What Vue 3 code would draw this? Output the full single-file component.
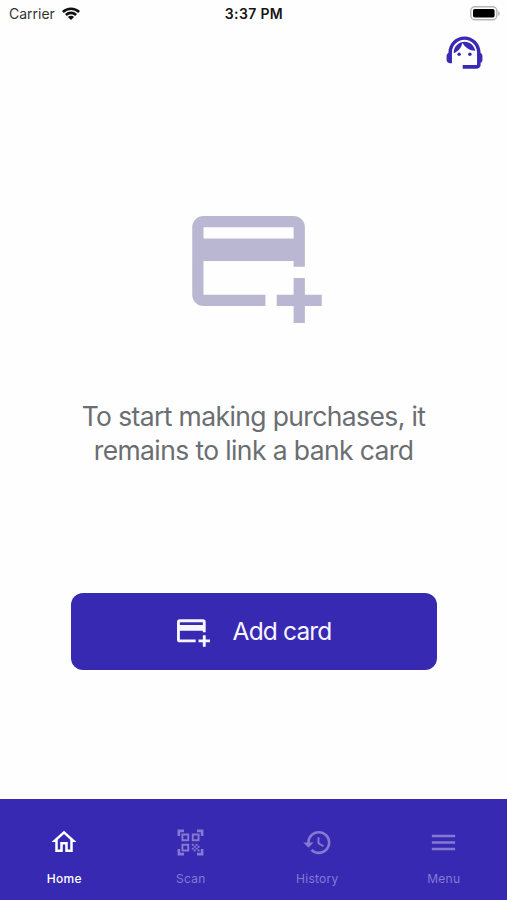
<template>
  <div class="screen">
    <header class="status-bar">
      <div class="carrier">
        <span>Carrier</span>
        <svg class="wifi" viewBox="0 0 18 13">
          <path d="M0 4.1a12.8 12.8 0 0 1 18 0l-1.8 1.9a10.2 10.2 0 0 0-14.4 0z" />
          <path d="M3 7.1a8.5 8.5 0 0 1 12 0l-1.8 1.9a6 6 0 0 0-8.4 0z" />
          <path d="M5.9 10.1a4.4 4.4 0 0 1 6.2 0L9 13z" />
        </svg>
      </div>
      <div class="time">3:37 PM</div>
      <div class="battery">
        <svg viewBox="0 0 31 15">
          <rect x="0.8" y="0.8" width="26" height="13" rx="4" class="battery-frame" />
          <rect x="3" y="3" width="21.6" height="8.6" rx="1.8" />
          <path d="M28.3 5c1.8.7 1.8 4.2 0 4.9z" class="battery-cap" />
        </svg>
      </div>
    </header>

    <div class="toolbar">
      <button class="support" aria-label="Support">
        <svg viewBox="0 0 24 24">
          <path d="M21 12.22C21 6.73 16.74 3 12 3c-4.69 0-9 3.65-9 9.28-.6.34-1 .98-1 1.72v2c0 1.1.9 2 2 2h1v-6.1c0-3.87 3.13-7 7-7s7 3.13 7 7V19h-8v2h8c1.1 0 2-.9 2-2v-1.22c.59-.31 1-.92 1-1.64v-2.3c0-.7-.41-1.31-1-1.62z" />
          <circle cx="9" cy="13" r="1" />
          <circle cx="15" cy="13" r="1" />
          <path d="M18 11.03C17.52 8.18 15.04 6 12.05 6c-3.03 0-6.29 2.51-6.03 6.45 2.47-1.01 4.33-3.21 4.86-5.89 1.31 2.63 4 4.44 7.12 4.47z" />
        </svg>
      </button>
    </div>

    <main class="content">
      <svg class="card-image" viewBox="2 4 23 19">
        <path :d="cardIcon" />
      </svg>
      <p class="message">
        <span class="line">To start making purchases, it</span>
        <span class="line">remains to link a bank card</span>
      </p>
      <button class="add-card">
        <svg viewBox="2 4 23 19">
          <path :d="cardIcon" />
        </svg>
        <span>Add card</span>
      </button>
    </main>

    <nav class="tabs">
      <button
        v-for="tab in tabs"
        :key="tab.name"
        class="tab"
        :class="[tab.name, { active: activeTab === tab.name }]"
        @click="activeTab = tab.name"
      >
        <span class="tab-icon">
          <svg viewBox="0 0 24 24"><path :d="tab.icon" /></svg>
        </span>
        <span class="tab-label">{{ tab.label }}</span>
      </button>
    </nav>
  </div>
</template>

<script setup>
import { ref } from 'vue';

const activeTab = ref('home');

// Bank card with a plus in the corner, used for the picture and the button
const cardIcon = 'M4 4h16a2 2 0 0 1 2 2v7h-2v-1H4v6h11v2H4a2 2 0 0 1-2-2V6a2 2 0 0 1 2-2zm0 2v2h16V6zm16 9h2v3h3v2h-3v3h-2v-3h-3v-2h3z';

const tabs = [
  {
    name: 'home',
    label: 'Home',
    icon: 'M12 5.69l5 4.5V18h-2v-6H9v6H7v-7.81l5-4.5M12 3L2 12h3v8h6v-6h2v6h6v-8h3L12 3z'
  },
  {
    name: 'scan',
    label: 'Scan',
    icon: 'M9.5 6.5v3h-3v-3h3M11 5H5v6h6V5zm-1.5 9.5v3h-3v-3h3M11 13H5v6h6v-6zm6.5-6.5v3h-3v-3h3M19 5h-6v6h6V5zm-6 8h1.5v1.5H13V13zm1.5 1.5H16V16h-1.5v-1.5zM16 13h1.5v1.5H16V13zm-3 3h1.5v1.5H13V16zm1.5 1.5H16V19h-1.5v-1.5zM16 16h1.5v1.5H16V16zm1.5-1.5H19V16h-1.5v-1.5zm0 3H19V19h-1.5v-1.5zM22 7h-2V4h-3V2h5v5zm0 15v-5h-2v3h-3v2h5zM2 22h5v-2H4v-3H2v5zM2 2v5h2V4h3V2H2z'
  },
  {
    name: 'history',
    label: 'History',
    icon: 'M13 3a9 9 0 0 0-9 9H1l3.89 3.89.07.14L9 12H6c0-3.87 3.13-7 7-7s7 3.13 7 7-3.13 7-7 7c-1.93 0-3.68-.79-4.94-2.06l-1.42 1.42A8.954 8.954 0 0 0 13 21a9 9 0 0 0 0-18zm-1 5v5l4.28 2.54.72-1.21-3.5-2.08V8H12z'
  },
  {
    name: 'menu',
    label: 'Menu',
    icon: 'M3 18h18v-2H3v2zm0-5h18v-2H3v2zm0-7v2h18V6H3z'
  }
];
</script>

<style>
body {
  margin: 0;
  background: #fefefe;
}
</style>

<style scoped>
.screen {
  display: flex;
  flex-direction: column;
  width: 100%;
  height: 900px;
  overflow: hidden;
  background: #fefefe;
  font-family: Inter, "Liberation Sans", sans-serif;
}

button {
  padding: 0;
  border: none;
  background: none;
  font-family: inherit;
  cursor: pointer;
}

svg {
  display: block;
  fill: currentColor;
}

.status-bar {
  display: grid;
  grid-template-columns: 1fr auto 1fr;
  align-items: center;
  height: 27px;
  padding: 0 6px 0 9px;
  box-sizing: border-box;
  color: #161616;
  font-size: 14px;
}

.carrier {
  display: flex;
  align-items: center;
  gap: 6px;
  color: #333;
}

.wifi {
  width: 18px;
  height: 13px;
  margin-left: 1px;
  color: #111;
}

.time {
  margin-right: 2px;
  font-weight: 600;
  letter-spacing: 0.35px;
}

.battery {
  justify-self: end;
}

.battery svg {
  width: 31px;
  height: 15px;
  color: #000;
}

.battery-frame {
  fill: none;
  stroke: #b5b5b5;
  stroke-width: 1.4;
}

.battery-cap {
  fill: #aaa;
}

.toolbar {
  display: flex;
  justify-content: flex-end;
  padding: 4px 21px 0 0;
}

.support svg {
  width: 43px;
  height: 43px;
  color: #3929b4;
}

.content {
  display: flex;
  flex: 1;
  flex-direction: column;
  align-items: center;
}

.card-image {
  width: 130px;
  height: 107px;
  margin: 142px 0 0 7px;
  color: #bab7d2;
}

.message {
  display: flex;
  flex-direction: column;
  align-items: center;
  margin: 76px 0 0;
  color: #6b6e71;
  font-size: 26.5px;
  line-height: 34px;
  letter-spacing: -0.62px;
}

.line {
  white-space: nowrap;
}

.add-card {
  display: flex;
  align-items: center;
  justify-content: center;
  gap: 23px;
  width: 366px;
  height: 77px;
  margin-top: 126px;
  padding: 0 0 2px 1px;
  box-sizing: border-box;
  border-radius: 12px;
  background: #3829b3;
  color: #f7f5ff;
  font-size: 24.5px;
  letter-spacing: -0.85px;
}

.add-card svg {
  width: 33px;
  height: 28px;
  margin-top: 4px;
}

.tabs {
  display: grid;
  grid-template-columns: repeat(4, 1fr);
  height: 101px;
  padding-left: 1px;
  background: #3829b3;
}

.tab {
  display: flex;
  flex-direction: column;
  align-items: center;
  padding-top: 27px;
  color: #8579d2;
}

.tab.active {
  color: #fff;
}

.tab-icon {
  display: flex;
  align-items: center;
  justify-content: center;
  height: 32px;
}

.tab-icon svg {
  width: 31px;
  height: 31px;
}

.home .tab-icon svg {
  width: 30px;
  height: 30px;
}

.tab-label {
  margin-top: 13px;
  font-size: 12px;
  line-height: 16px;
  letter-spacing: 0.25px;
}

.active .tab-label {
  font-weight: 500;
}
</style>
